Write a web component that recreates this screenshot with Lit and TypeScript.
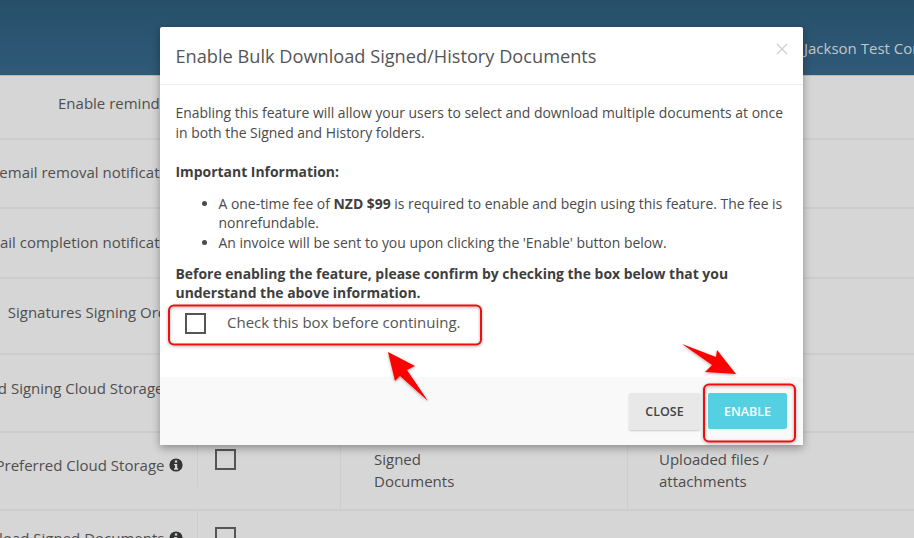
import { LitElement, html, css, svg } from "lit";
import { customElement } from "lit/decorators.js";

const info = svg`<svg class="info" viewBox="0 0 14 14" width="14" height="14"><circle cx="7" cy="7" r="6.6" fill="#333"/><rect x="5.9" y="2.4" width="2.3" height="2.2" fill="#d6d6d6"/><path d="M5 5.9h3.2v4.4h1v1.4H5v-1.4h1V7.300H5z" fill="#d6d6d6"/></svg>`;

const rows = [
  { h: 64, pt: 17, label: "Enable reminders", icon: false },
  { h: 69, pt: 22, label: "Send email removal notification", icon: false },
  { h: 70, pt: 23, label: "Send email completion notification", icon: false },
  { h: 76, pt: 23, label: "Signatures Signing Order", icon: false },
  { h: 78, pt: 23, label: "Preferred Signing Cloud Storage", icon: true },
];

@customElement("app-root")
export class AppRoot extends LitElement {
  static styles = css`
    :host {
      display: block;
      width: 914px;
      height: 538px;
      position: relative;
      overflow: hidden;
      background: #d6d6d6;
      font-family: "Open Sans", "Noto Sans", sans-serif;
      color: #4c4c4c;
    }
    .top {
      height: 76px;
      box-sizing: border-box;
      background: linear-gradient(#274f6a, #2f5a78);
      border-bottom: 1px solid #b9b9b9;
      padding: 38px 0 0 804px;
      color: #c3c6c9;
      font-size: 15px;
      line-height: 20px;
      white-space: nowrap;
      overflow: hidden;
    }
    .row {
      display: grid;
      grid-template-columns: 198px 142px 287px 1fr;
      border-bottom: 2px solid #cdcdcd;
      box-sizing: border-box;
    }
    .label {
      font-size: 15px;
      line-height: 20px;
      white-space: nowrap;
      display: flex;
      justify-content: flex-end;
      align-items: flex-start;
      gap: 4px;
      padding-right: 16.5px;
      box-sizing: border-box;
      overflow: hidden;
      color: #4f4f4f;
    }
    .info { flex: none; margin-top: 3px; }
    .row.cells { height: 78px; }
    .row.cells .label,
    .row.last .label {
      border-right: 1px solid #cdcdcd;
      height: 54px;
      padding-right: 14.5px;
    }
    .row.cells .label { padding-top: 22px; }
    .row.last .label { padding-top: 17px; }
    .cell { padding: 16px 0 0 17px; box-sizing: border-box; }
    .cell.text {
      font-size: 15px;
      line-height: 21.5px;
      padding: 16px 0 0 33px;
      border-left: 1px solid #cdcdcd;
    }
    .cell.text.wide { padding-left: 31px; }
    .cb {
      display: block;
      box-sizing: border-box;
      width: 21px;
      height: 21px;
      border: 2px solid #555;
    }
    .modal {
      position: absolute;
      left: 160px;
      top: 27px;
      width: 643px;
      height: 418px;
      background: #fff;
      display: flex;
      flex-direction: column;
      box-shadow: 0 3px 9px rgba(0, 0, 0, 0.35);
      border-radius: 2px;
      font-size: 13.93px;
      line-height: 19.6px;
      color: #4a4a4a;
    }
    .m-head {
      height: 58px;
      box-sizing: border-box;
      border-bottom: 1px solid #eee;
      display: flex;
      justify-content: space-between;
      align-items: flex-start;
      padding: 16px 15px 0 15.5px;
    }
    h4 {
      margin: 0;
      font-size: 18.2px;
      font-weight: 400;
      line-height: 26px;
      color: #555;
    }
    .close { display: block; }
    .m-body {
      flex: 1;
      padding: 18px 16px 0 15.5px;
    }
    p { margin: 0; }
    .gap { margin-top: 20px; }
    ul {
      margin: 12px 0 11px;
      padding: 0 0 0 43px;
    }
    b { font-weight: 700; color: #3e3e3e; }
    .check {
      display: flex;
      align-items: center;
      height: 22px;
      margin-top: 9px;
      padding-left: 9.5px;
      gap: 21px;
      font-size: 15px;
      color: #555;
    }
    .check .cb { margin-top: 2px; }
    .m-foot {
      height: 68px;
      box-sizing: border-box;
      background: #f9f9f9;
      display: flex;
      justify-content: flex-end;
      align-items: flex-start;
      gap: 8px;
      padding: 16px 16px 0 0;
    }
    button {
      font-family: inherit;
      font-size: 12.5px;
      font-weight: 600;
      border: 0;
      border-radius: 2px;
      padding: 2px 0 0;
      line-height: 1;
    }
    .b-close {
      width: 71px;
      height: 37px;
      background: #e8e8e8;
      color: #444;
      box-shadow: 0 1px 2px rgba(0, 0, 0, 0.2);
    }
    .b-enable {
      width: 79px;
      height: 36px;
      background: #54d0e2;
      color: #fff;
    }
    .marks {
      position: absolute;
      left: 0;
      top: 0;
      pointer-events: none;
    }
  `;

  render() {
    return html`
      <div class="top">Jackson Test Company</div>
      ${rows.map(
        (r) => html`<div class="row" style="height:${r.h}px"><div class="label" style="padding-top:${r.pt}px">${r.label} ${r.icon ? info : ""}</div></div>`
      )}
      <div class="row cells">
        <div class="label">Preferred Cloud Storage ${info}</div>
        <div class="cell"><span class="cb"></span></div>
        <div class="cell text">Signed<br />Documents</div>
        <div class="cell text wide">Uploaded files /<br />attachments</div>
      </div>
      <div class="row last">
        <div class="label">Download Signed Documents ${info}</div>
        <div class="cell"><span class="cb"></span></div>
      </div>

      <div class="modal">
        <div class="m-head">
          <h4>Enable Bulk Download Signed/History Documents</h4>
          <svg class="close" width="12" height="12" viewBox="0 0 12 12"><path d="M1 1l10 10M11 1L1 11" stroke="#cfcfcf" stroke-width="1.3" fill="none"/></svg>
        </div>
        <div class="m-body">
          <p>Enabling this feature will allow your users to select and download multiple documents at once in both the Signed and History folders.</p>
          <p class="gap"><b>Important Information:</b></p>
          <ul>
            <li>A one-time fee of <b>NZD $99</b> is required to enable and begin using this feature. The fee is nonrefundable.</li>
            <li>An invoice will be sent to you upon clicking the 'Enable' button below.</li>
          </ul>
          <p><b>Before enabling the feature, please confirm by checking the box below that you understand the above information.</b></p>
          <div class="check"><span class="cb"></span><span>Check this box before continuing.</span></div>
        </div>
        <div class="m-foot">
          <button class="b-close">CLOSE</button>
          <button class="b-enable">ENABLE</button>
        </div>
      </div>

      <svg class="marks" width="914" height="538" viewBox="0 0 914 538">
        <defs>
          <filter id="s" x="-20%" y="-20%" width="140%" height="140%">
            <feDropShadow dx="0" dy="1" stdDeviation="1.5" flood-color="#000" flood-opacity="0.35"/>
          </filter>
        </defs>
        <g filter="url(#s)" fill="none" stroke="#f01010" stroke-width="2">
          <rect x="169" y="305.500" width="312" height="39" rx="5"/>
          <rect x="704" y="384.500" width="91" height="57" rx="5"/>
        </g>
        <g filter="url(#s)" fill="#fe0000">
          <polygon points="388,352 415,366 407,370 428,401 400,376 395,381"/>
          <polygon points="682,344 716,357 717,350 736,374 705,372 712,365"/>
        </g>
      </svg>
    `;
  }
}
